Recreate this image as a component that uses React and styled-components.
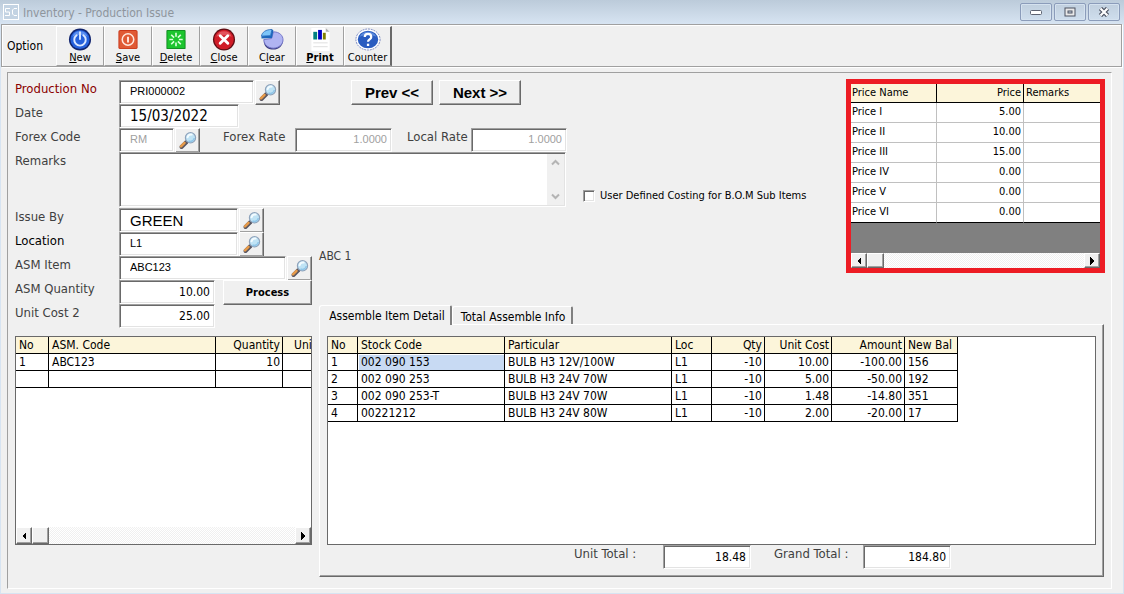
import React from "react";
import styled, { createGlobalStyle, css } from "styled-components";

const ui = '"DejaVu Sans Condensed", "DejaVu Sans", "Noto Sans", sans-serif';
const arial = '"Liberation Sans", Arial, sans-serif';

const GlobalStyle = createGlobalStyle`
  *, *::before, *::after { box-sizing: border-box; }
  body { margin: 0; background: #f0f0f0; font-family: ${ui}; font-size: 12px; line-height: 16px; color: #000; }
  button, input, textarea { font: inherit; color: inherit; margin: 0; border-radius: 0; }
  svg { display: block; flex: none; }
`;

const raised = css`
  border: 1px solid;
  border-color: #fff #696969 #696969 #fff;
  box-shadow: inset -1px -1px 0 #a0a0a0;
  background: #f0f0f0;
`;
const sunken = css`
  border: 1px solid;
  border-color: #a0a0a0 #fff #fff #a0a0a0;
  box-shadow: inset 1px 1px 0 #696969, inset -1px -1px 0 #e3e3e3;
  background: #fff;
`;

const Window = styled.div`
  background: #f0f0f0;
  border: solid #d7e4f2;
  border-width: 0 1px 2px;
`;
const TitleBar = styled.header`
  display: flex;
  align-items: center;
  height: 24px;
  padding: 0 4px 0 3px;
  gap: 4px;
  margin: 0 -1px;
  background: linear-gradient(#bccbda, #d7e4f2);
`;
const Title = styled.h1`
  margin: 0;
  flex: 1;
  font-size: 12px;
  font-weight: normal;
  color: #8e959d;
  padding-top: 2px;
`;
const Captions = styled.div`
  display: flex;
  gap: 2px;
`;
const Caption = styled.button`
  width: 32px;
  height: 18px;
  padding: 0;
  display: grid;
  place-items: center;
  border: 1px solid #8b9cba;
  border-radius: 2px;
  background: linear-gradient(#c0cfde, #cfdeed);
  box-shadow: inset 0 0 0 1px #d5e2ef;
`;
const Toolbar = styled.nav`
  display: flex;
  align-items: center;
  height: 43px;
  border: 1px solid #a0a0a0;
  margin-right: 1px;
  box-shadow: inset 1px 1px 0 #fff, 1px 1px 0 #fff;
`;
const OptionLabel = styled.span`
  width: 54px;
  padding-left: 5px;
`;
const Tool = styled.button`
  width: 48px;
  height: 40px;
  padding: 1px 0 0;
  display: flex;
  flex-direction: column;
  align-items: center;
  font-size: 11px;
  line-height: 13px;
  font-weight: ${(p) => (p.$bold ? "bold" : "normal")};
  border: 1px solid;
  border-color: #fff #a0a0a0 #a0a0a0 #fff;
  background: #f0f0f0;
  &:last-child { border-right: 2px solid #696969; }
  svg { width: 26px; height: 23px; }
`;
const Panel = styled.main`
  margin: 5px 11px 4px 6px;
  padding: 6px 6px 11px 7px;
  border: 1px solid;
  border-color: #a0a0a0 #fff #fff #a0a0a0;
`;
const Upper = styled.section`
  display: flex;
  align-items: flex-start;
`;
const Lower = styled.section`
  display: flex;
  align-items: flex-start;
  gap: 7px;
  padding-right: 1px;
`;
const Form = styled.div`
  padding-top: 1px;
`;
const Row = styled.div`
  display: flex;
  align-items: flex-start;
  height: ${(p) => p.$height || 24}px;
`;
const Group = styled.div`
  display: flex;
`;
const Label = styled.label`
  width: ${(p) => p.$width || 104}px;
  flex: none;
  font-size: 13px;
  line-height: 17px;
  white-space: nowrap;
  color: ${(p) => p.$color || "#404040"};
`;
const ItemName = styled.span`
  padding: 40px 0 0 7px;
  color: #404040;
`;
const Field = styled.input`
  ${sunken}
  flex: none;
  width: ${(p) => p.$width}px;
  height: 24px;
  padding: 0 4px ${(p) => (p.$size === 11 ? 2 : 0)}px ${(p) => (p.$right ? 4 : 10)}px;
  text-align: ${(p) => (p.$right ? "right" : "left")};
  font-family: ${(p) => (p.$arial ? arial : ui)};
  font-size: ${(p) => p.$size || 12}px;
  color: ${(p) => (p.$muted ? "#a0a0a0" : "#000")};
`;
const Button = styled.button`
  ${raised}
  width: ${(p) => p.$width}px;
  height: 25px;
  padding: 0;
  display: grid;
  place-items: center;
  font-family: ${(p) => (p.$arial ? arial : ui)};
  font-size: ${(p) => (p.$arial ? 15 : 11)}px;
  font-weight: bold;
`;
const FindButton = styled(Button)`
  width: 25px;
  margin-left: 1px;
`;
const Gap = styled.span`
  width: ${(p) => p.$width}px;
  flex: none;
`;
const MemoBox = styled.div`
  ${sunken}
  width: 447px;
  height: 55px;
  padding: 1px;
  display: flex;
`;
const Memo = styled.textarea`
  flex: 1;
  border: 0;
  padding: 2px 9px;
  resize: none;
  background: transparent;
  overflow: hidden;
`;
const MemoScroll = styled.div`
  width: 17px;
  display: flex;
  flex-direction: column;
  justify-content: space-between;
  background: #f0f0f0;
`;
const MemoArrow = styled.button`
  border: 0;
  padding: 0;
  height: 17px;
  display: grid;
  place-items: center;
  background: none;
`;
const Check = styled.label`
  display: flex;
  align-items: center;
  gap: 5px;
  padding: 109px 0 0 16px;
  font-size: 11px;
  white-space: nowrap;
`;
const CheckBox = styled.input`
  ${sunken}
  appearance: none;
  width: 12px;
  height: 12px;
`;
const PriceBox = styled.div`
  margin-left: auto;
  width: 259px;
  border: 5px solid #ed1c24;
  background: #808080;
  font-size: 11px;
`;
const Clip = styled.div`
  overflow: hidden;
  height: ${(p) => p.$height}px;
`;
const Table = styled.table`
  table-layout: fixed;
  width: ${(p) => p.$width};
  border-collapse: separate;
  border-spacing: 0;
  background: #fff;
`;
const cell = css`
  height: 17px;
  padding: 1px 2px 0 3px;
  line-height: 15px;
  font-weight: normal;
  white-space: nowrap;
  overflow: hidden;
  text-align: ${(p) => (p.$right ? "right" : "left")};
  border: solid #000;
  border-width: 0 1px 1px 0;
`;
const Th = styled.th`
  ${cell}
  background: #fcf5da;
`;
const Td = styled.td`
  ${cell}
  background: ${(p) => (p.$selected ? "#c8daf3" : "#fff")};
  box-shadow: ${(p) => (p.$selected ? "inset 1px 1px 0 #fff" : "none")};
`;
const PriceTh = styled(Th)`
  height: 19px;
  padding: 0 2px 2px 1px;
  &:last-child { border-right: 0; padding-left: 2px; }
`;
const PriceTd = styled(Td)`
  height: 20px;
  padding: 0 2px 2px 1px;
  border-color: #c0c0c0;
  &:last-child { border-right: 0; }
  tr:last-child > & { border-bottom-color: #000; }
`;
const Scroll = styled.div`
  display: flex;
  height: ${(p) => p.$height}px;
  background: repeating-conic-gradient(#fff 0 25%, #f0f0f0 0 50%) 0 0 / 2px 2px;
`;
const ScrollButton = styled.button`
  ${raised}
  width: 16px;
  padding: 0;
  display: grid;
  place-items: center;
  &:last-child { margin-left: auto; }
`;
const Thumb = styled.span`
  ${raised}
  width: 17px;
`;
const LeftColumn = styled.div`
  width: 297px;
  flex: none;
`;
const GridBox = styled.div`
  height: 209px;
  display: flex;
  flex-direction: column;
  justify-content: space-between;
  border: 1px solid #696969;
  background: #fff;
  overflow: hidden;
`;
const Tabs = styled.section`
  flex: 1;
  min-width: 0;
  padding-top: 1px;
`;
const TabList = styled.div`
  display: flex;
  align-items: flex-end;
  height: 19px;
`;
const Tab = styled.button`
  height: ${(p) => (p.$active ? 20 : 18)}px;
  width: ${(p) => (p.$active ? 133 : 121)}px;
  padding: ${(p) => (p.$active ? "0 0 0 4px" : "2px 0 0 2px")};
  white-space: nowrap;
  margin-bottom: ${(p) => (p.$active ? -1 : 0)}px;
  background: #f0f0f0;
  border: solid;
  border-width: 1px 2px 0 1px;
  border-color: #fff #808080 #fff #fff;
  border-radius: 3px 2px 0 0;
  z-index: 1;
`;
const TabPanel = styled.div`
  padding: 11px 7px 7px;
  border: 1px solid;
  border-color: #fff #696969 #696969 #fff;
  box-shadow: inset -1px -1px 0 #a0a0a0;
`;
const Totals = styled.div`
  display: flex;
  align-items: flex-start;
  padding-left: 247px;
`;

const Lens = () => (
  <svg width="20" height="20" viewBox="0 0 20 20">
    <path d="M3.500 16 8.500 11" stroke="#5a5660" strokeWidth="4" strokeLinecap="round" />
    <path d="M3 15.300 6.500 11.800" stroke="#e79a48" strokeWidth="2.500" strokeLinecap="round" />
    <circle cx="12.500" cy="6.800" r="5.100" fill="#bfe3f5" stroke="#8fa3bb" strokeWidth="1.200" />
    <path d="M9.600 6.300a3.500 3.500 0 0 1 4-2.700" stroke="#f2fbff" strokeWidth="2" fill="none" strokeLinecap="round" />
    <path d="M10.500 10a4 4 0 0 0 5.800-3" stroke="#8fc6e8" strokeWidth="1.500" fill="none" />
  </svg>
);
const Arrow = ({ left }) => (
  <svg width="6" height="8" viewBox="0 0 6 8" shapeRendering="crispEdges">
    <path d={left ? "M5 0v8L1 4z" : "M1 0v8l4-4z"} fill="#000" />
  </svg>
);
const Chevron = ({ up }) => (
  <svg width="9" height="7" viewBox="0 0 9 7">
    <path d={up ? "M1 5.500 4.500 2 8 5.500" : "M1 1.500 4.500 5 8 1.500"} fill="none" stroke="#b4b4b4" strokeWidth="2" />
  </svg>
);

const tools = [
  ["New", <svg viewBox="0 0 24 24"><circle cx="12" cy="12" r="11.500" fill="#10246e" /><circle cx="12" cy="12" r="10" fill="#2460dc" /><path d="M4 9a8.500 8.500 0 0 1 16 0Q12 5 4 9z" fill="#5c90f0" /><path d="M8.500 7.500a6 6 0 1 0 7 0M12 4.500v7" stroke="#dbe8ff" strokeWidth="2" fill="none" strokeLinecap="round" /></svg>],
  ["Save", <svg viewBox="0 0 24 24"><rect x="2" y="2" width="20" height="20" rx="2" fill="#c9381a" /><rect x="3" y="3" width="18" height="18" rx="1" fill="#e05a35" /><circle cx="12" cy="12" r="6" stroke="#ffe9df" strokeWidth="1.600" fill="none" /><path d="M12 9v6" stroke="#ffe9df" strokeWidth="2" /></svg>],
  ["Delete", <svg viewBox="0 0 24 24"><rect x="2" y="2" width="20" height="20" rx="1" fill="#128a22" /><rect x="3" y="3" width="18" height="18" fill="#1cc52e" /><path d="M12 5v4M12 15v4M5 12h4M15 12h4M7 7l3 3M14 14l3 3M17 7l-3 3M10 14l-3 3" stroke="#dcffdc" strokeWidth="1.700" /></svg>],
  ["Close", <svg viewBox="0 0 24 24"><circle cx="12" cy="12" r="11.500" fill="#5e0d14" /><circle cx="12" cy="12" r="10.200" fill="#d01c27" /><path d="M4 9a8.500 8.500 0 0 1 16 0Q12 6 4 9z" fill="#e2535c" /><path d="m8 8 8 8M16 8l-8 8" stroke="#fff" strokeWidth="3" strokeLinecap="round" /></svg>],
  ["Clear", <svg viewBox="0 0 24 24"><path d="M3.500 12v3c1 5 5 7.500 10 7.500s10-3.500 10-10z" fill="#3b3c80" /><path d="M13.500 4C20 4 23.500 8 23.500 12.500S19 21 13.500 21 3.500 17.500 3.500 12l8-1z" fill="#b0b4f2" stroke="#7275c8" /><path d="M1 8.500C1.500 4.500 5.500 1.500 12 1.500L10.500 8z" fill="#7cc4f8" stroke="#1c5fb4" strokeWidth=".8" /><path d="M1 8.500 10.500 8 12 1.500l1.500 1L12 10.500 1 11z" fill="#1c66bc" /></svg>],
  ["Print", <svg viewBox="0 0 24 24"><path d="M3 0h15l4 4v20H3z" fill="#fff" /><path d="M18 0l4 4h-4z" fill="#b0b0b0" /><path d="M5 4h4v8H5z" fill="#008080" /><path d="M10 2h4v10h-4z" fill="#0000c8" /><path d="M15 5h3v7h-3z" fill="#808000" /><path d="M5 15.500h15M5 19.500h15" stroke="#dedede" /></svg>],
  ["Counter", <svg viewBox="0 0 28 24"><ellipse cx="14" cy="12" rx="13" ry="11.300" fill="#fff" stroke="#6c7cbc" strokeDasharray="2 1" /><ellipse cx="14" cy="12" rx="11" ry="9.500" fill="#2a5cc0" /><path d="M5 9c3-7 15-7 18 0-5-2-13-2-18 0z" fill="#5c8adc" /><path d="M10.500 9.300c0-4.500 7-4.500 7 0 0 2.500-3.500 2.500-3.500 5" stroke="#fff" strokeWidth="2.400" fill="none" /><path d="M12.800 16.500h2.500v2.500h-2.500z" fill="#fff" /></svg>],
];

const Find = ({ name }) => <FindButton type="button" aria-label={name}><Lens /></FindButton>;

const HScroll = ({ height }) => (
  <Scroll $height={height}>
    <ScrollButton type="button" aria-label="Scroll left"><Arrow left /></ScrollButton>
    <Thumb />
    <ScrollButton type="button" aria-label="Scroll right"><Arrow /></ScrollButton>
  </Scroll>
);

const DataTable = ({ width, cols, rows, selected, Head = Th, Cell = Td }) => (
  <Table $width={width}>
    <colgroup>
      {cols.map((c) => <col key={c[0]} width={c[1]} />)}
    </colgroup>
    <thead>
      <tr>{cols.map((c) => <Head key={c[0]} scope="col" $right={c[2]}>{c[0]}</Head>)}</tr>
    </thead>
    <tbody>
      {rows.map((r, i) => (
        <tr key={i}>
          {cols.map((c, j) => (
            <Cell key={c[0]} $right={c[2]} $selected={selected && i === 0 && j === 1}>{r[j]}</Cell>
          ))}
        </tr>
      ))}
    </tbody>
  </Table>
);

const priceCols = [["Price Name", 86], ["Price", 87, true], ["Remarks", 76]];
const priceRows = [["Price I", "5.00"], ["Price II", "10.00"], ["Price III", "15.00"], ["Price IV", "0.00"], ["Price V", "0.00"], ["Price VI", "0.00"]];
const asmCols = [["No", 33], ["ASM. Code", 167], ["Quantity", 67, true], ["Unit", 36, true]];
const itemCols = [["No", 30], ["Stock Code", 147], ["Particular", 167], ["Loc", 40], ["Qty", 53, true], ["Unit Cost", 67, true], ["Amount", 73, true], ["New Bal", 53]];
const itemRows = [
  ["1", "002 090 153", "BULB H3 12V/100W", "L1", "-10", "10.00", "-100.00", "156"],
  ["2", "002 090 253", "BULB H3 24V 70W", "L1", "-10", "5.00", "-50.00", "192"],
  ["3", "002 090 253-T", "BULB H3 24V 70W", "L1", "-10", "1.48", "-14.80", "351"],
  ["4", "00221212", "BULB H3 24V 80W", "L1", "-10", "2.00", "-20.00", "17"],
];

export default function App() {
  return (
    <Window>
      <GlobalStyle />
      <TitleBar>
        <svg width="16" height="16" viewBox="0 0 16 16">
          <rect x="0.500" y="0.500" width="15" height="15" fill="#c3d3e3" stroke="#fff" />
          <path d="M7 4.500H2.500V8H6.500v3.500H2M14 4.500h-3L9.500 6v4l1.500 1.500h3" fill="none" stroke="#fff" />
        </svg>
        <Title>Inventory - Production Issue</Title>
        <Captions>
          <Caption type="button" aria-label="Minimize">
            <svg width="12" height="8" viewBox="0 0 12 8"><rect x="0.500" y="2.500" width="11" height="4" rx="1" fill="#fff" stroke="#5c6270" /></svg>
          </Caption>
          <Caption type="button" aria-label="Maximize">
            <svg width="12" height="10" viewBox="0 0 12 10"><rect x="1" y="1" width="10" height="8" fill="#e8e8e8" stroke="#4c5260" /><rect x="4" y="4" width="4" height="2" fill="#c5d4e3" stroke="#4c5260" /></svg>
          </Caption>
          <Caption type="button" aria-label="Close">
            <svg width="12" height="10" viewBox="0 0 12 10"><path d="m2.500 1.500 7 7M9.500 1.500l-7 7" stroke="#4c5260" strokeWidth="4.500" /><path d="m2.500 1.500 7 7M9.500 1.500l-7 7" stroke="#fff" strokeWidth="2.200" /></svg>
          </Caption>
        </Captions>
      </TitleBar>
      <Toolbar>
        <OptionLabel>Option</OptionLabel>
        {tools.map(([name, icon]) => (
          <Tool key={name} type="button" $bold={name === "Print"}>
            {icon}
            <span>{name === "Counter" ? name : name === "Clear" ? <>C<u>l</u>ear</> : <><u>{name[0]}</u>{name.slice(1)}</>}</span>
          </Tool>
        ))}
      </Toolbar>
      <Panel>
        <Upper>
          <Form>
            <Row>
              <Label htmlFor="no" $color="#8b0000">Production No</Label>
              <Field id="no" $width={135} $arial $size={11} defaultValue="PRI000002" />
              <Find name="Find production" />
              <Gap $width={71} />
              <Button type="button" $width={82} $arial>Prev &lt;&lt;</Button>
              <Gap $width={6} />
              <Button type="button" $width={82} $arial>Next &gt;&gt;</Button>
            </Row>
            <Row>
              <Label htmlFor="date">Date</Label>
              <Field id="date" $width={120} $size={15} defaultValue="15/03/2022" />
            </Row>
            <Row>
              <Label htmlFor="forex">Forex Code</Label>
              <Field id="forex" $width={55} $arial $size={11} $muted defaultValue="RM" />
              <Find name="Find forex code" />
              <Gap $width={23} />
              <Label htmlFor="frate" $width={72}>Forex Rate</Label>
              <Field id="frate" $width={97} $arial $size={11} $right $muted defaultValue="1.0000" />
              <Gap $width={15} />
              <Label htmlFor="lrate" $width={64}>Local Rate</Label>
              <Field id="lrate" $width={96} $arial $size={11} $right $muted defaultValue="1.0000" />
            </Row>
            <Row $height={56}>
              <Label htmlFor="remarks">Remarks</Label>
              <MemoBox>
                <Memo id="remarks" />
                <MemoScroll>
                  <MemoArrow type="button" aria-label="Scroll up"><Chevron up /></MemoArrow>
                  <MemoArrow type="button" aria-label="Scroll down"><Chevron /></MemoArrow>
                </MemoScroll>
              </MemoBox>
            </Row>
            <Group>
              <div>
                <Row>
                  <Label htmlFor="issue">Issue By</Label>
                  <Field id="issue" $width={119} $arial $size={15} defaultValue="GREEN" />
                  <Find name="Find issuer" />
                </Row>
                <Row>
                  <Label htmlFor="loc" $color="#000">Location</Label>
                  <Field id="loc" $width={119} $arial $size={11} defaultValue="L1" />
                  <Find name="Find location" />
                </Row>
                <Row>
                  <Label htmlFor="item">ASM Item</Label>
                  <Field id="item" $width={167} $arial $size={11} defaultValue="ABC123" />
                  <Find name="Find item" />
                </Row>
              </div>
              <ItemName>ABC 1</ItemName>
            </Group>
            <Row>
              <Label htmlFor="qty">ASM Quantity</Label>
              <Field id="qty" $width={96} $right defaultValue="10.00" />
              <Gap $width={8} />
              <Button type="button" $width={89}>Process</Button>
            </Row>
          </Form>
          <Check>
            <CheckBox type="checkbox" />
            User Defined Costing for B.O.M Sub Items
          </Check>
          <PriceBox>
            <Clip $height={169}>
              <DataTable width="100%" cols={priceCols} rows={priceRows} Head={PriceTh} Cell={PriceTd} />
            </Clip>
            <HScroll height={15} />
          </PriceBox>
        </Upper>
        <Lower>
          <LeftColumn>
            <Row $height={32}>
              <Label htmlFor="cost">Unit Cost 2</Label>
              <Field id="cost" $width={96} $right defaultValue="25.00" />
            </Row>
            <GridBox>
              <DataTable width="303px" cols={asmCols} rows={[["1", "ABC123", "10"], []]} />
              <HScroll height={17} />
            </GridBox>
          </LeftColumn>
          <Tabs>
            <TabList role="tablist">
              <Tab type="button" role="tab" aria-selected="true" $active>Assemble Item Detail</Tab>
              <Tab type="button" role="tab" aria-selected="false">Total Assemble Info</Tab>
            </TabList>
            <TabPanel role="tabpanel">
              <GridBox>
                <DataTable width="630px" cols={itemCols} rows={itemRows} selected />
              </GridBox>
              <Totals>
                <Label htmlFor="unitTotal" $width={89}>Unit Total :</Label>
                <Field id="unitTotal" $width={88} $right defaultValue="18.48" />
                <Gap $width={23} />
                <Label htmlFor="grandTotal" $width={89}>Grand Total :</Label>
                <Field id="grandTotal" $width={88} $right defaultValue="184.80" />
              </Totals>
            </TabPanel>
          </Tabs>
        </Lower>
      </Panel>
    </Window>
  );
}
